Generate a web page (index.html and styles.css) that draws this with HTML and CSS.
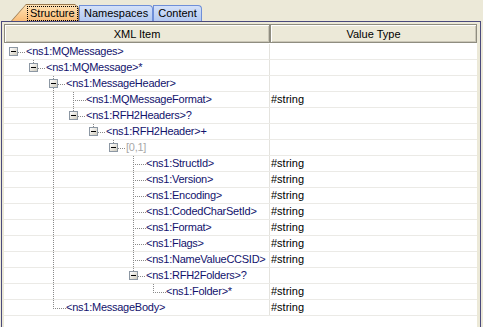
FILE: index.html
```html
<!DOCTYPE html>
<html lang="en">
  <head>
    <meta charset="UTF-8" />
    <title>Structure</title>
    <link rel="stylesheet" href="styles.css">
  </head>
  <body>
    <div class="tabs">
      <div class="tab selected"><span class="tab-label">Structure</span></div>
      <div class="tab">Namespaces</div>
      <div class="tab">Content</div>
    </div>

    <div class="panel">
      <div class="table">
        <div class="header">
          <div class="hcell">XML Item</div>
          <div class="hcell">Value Type</div>
        </div>

        <div class="rows">
          <!-- tree connector lines -->
          <svg class="lines" width="266" height="272">
            <path d="M14 8.5H22 M34 24.5H42 M54 40.5H62 M69 56.5H82 M74 72.5H82 M94 88.5H102 M114 104.5H122
                     M129 120.5H142 M129 136.5H142 M129 152.5H142 M129 168.5H142 M129 184.5H142 M129 200.5H142 M129 216.5H142
                     M134 232.5H142 M149 248.5H162 M49 264.5H62
                     M29.5 16V25 M49.5 32V265 M69.5 48V73 M89.5 80V89 M109.5 96V105 M129.5 112V233 M149.5 240V249" />
          </svg>

          <div class="row"><div class="cell tree lv0"><span class="toggle"></span><span class="name">&lt;ns1:MQMessages&gt;</span></div><div class="cell value"></div></div>
          <div class="row"><div class="cell tree lv1"><span class="toggle"></span><span class="name">&lt;ns1:MQMessage&gt;*</span></div><div class="cell value"></div></div>
          <div class="row"><div class="cell tree lv2"><span class="toggle"></span><span class="name">&lt;ns1:MessageHeader&gt;</span></div><div class="cell value"></div></div>
          <div class="row"><div class="cell tree lv3"><span class="spacer"></span><span class="name">&lt;ns1:MQMessageFormat&gt;</span></div><div class="cell value">#string</div></div>
          <div class="row"><div class="cell tree lv3"><span class="toggle"></span><span class="name">&lt;ns1:RFH2Headers&gt;?</span></div><div class="cell value"></div></div>
          <div class="row"><div class="cell tree lv4"><span class="toggle"></span><span class="name">&lt;ns1:RFH2Header&gt;+</span></div><div class="cell value"></div></div>
          <div class="row"><div class="cell tree lv5"><span class="toggle"></span><span class="name group">[0,1]</span></div><div class="cell value"></div></div>
          <div class="row"><div class="cell tree lv6"><span class="spacer"></span><span class="name">&lt;ns1:StructId&gt;</span></div><div class="cell value">#string</div></div>
          <div class="row"><div class="cell tree lv6"><span class="spacer"></span><span class="name">&lt;ns1:Version&gt;</span></div><div class="cell value">#string</div></div>
          <div class="row"><div class="cell tree lv6"><span class="spacer"></span><span class="name">&lt;ns1:Encoding&gt;</span></div><div class="cell value">#string</div></div>
          <div class="row"><div class="cell tree lv6"><span class="spacer"></span><span class="name">&lt;ns1:CodedCharSetId&gt;</span></div><div class="cell value">#string</div></div>
          <div class="row"><div class="cell tree lv6"><span class="spacer"></span><span class="name">&lt;ns1:Format&gt;</span></div><div class="cell value">#string</div></div>
          <div class="row"><div class="cell tree lv6"><span class="spacer"></span><span class="name">&lt;ns1:Flags&gt;</span></div><div class="cell value">#string</div></div>
          <div class="row"><div class="cell tree lv6"><span class="spacer"></span><span class="name">&lt;ns1:NameValueCCSID&gt;</span></div><div class="cell value">#string</div></div>
          <div class="row"><div class="cell tree lv6"><span class="toggle"></span><span class="name">&lt;ns1:RFH2Folders&gt;?</span></div><div class="cell value"></div></div>
          <div class="row"><div class="cell tree lv7"><span class="spacer"></span><span class="name">&lt;ns1:Folder&gt;*</span></div><div class="cell value">#string</div></div>
          <div class="row"><div class="cell tree lv2"><span class="spacer"></span><span class="name">&lt;ns1:MessageBody&gt;</span></div><div class="cell value">#string</div></div>
        </div>
      </div>
    </div>
  </body>
</html>
```

FILE: styles.css
```css
html,
body {
  margin: 0;
  height: 100%;
}

body {
  width: 483px;
  height: 327px;
  overflow: hidden;
  background: #ece9d8;
  font-family: "Liberation Sans", Arial, sans-serif;
  font-size: 11px;
  color: #000;
}

/* tabs */
.tabs {
  display: flex;
  align-items: flex-end;
  height: 21px;
  padding-left: 11px;
}

.tab {
  height: 15px;
  padding: 0 4px;
  line-height: 15px;
  background: linear-gradient(#d4e1f9, #b3c9f1);
  border: 1px solid #6f8fd8;
  border-bottom: none;
  border-radius: 0 4px 0 0;
}

.tab.selected {
  position: relative;
  height: 17px;
  width: 68px;
  padding: 0;
  border: none;
  background: #9a7a50;
  clip-path: polygon(0 100%, 15px 0, calc(100% - 4px) 0, 100% 4px, 100% 100%);
}

.tab.selected::before {
  content: "";
  position: absolute;
  inset: 1px 1px 0 1px;
  background: linear-gradient(#ffe2b4, #f9bd78);
  clip-path: polygon(0 100%, 14px 0, calc(100% - 3px) 0, 100% 3px, 100% 100%);
}

.tab-label {
  position: relative;
  display: block;
  margin: 2px 1px 0 16px;
  padding: 0 2px;
  line-height: 13px;
  border: 1px dotted #000;
}

/* panel */
.panel {
  margin: 0 2px 0 1px;
  height: 320px;
  padding: 2px 3px 0 2px;
  border: 1px solid #4a4a7c;
  border-bottom: none;
  box-sizing: border-box;
}

.table {
  background: #fff;
  height: 100%;
}

.header {
  display: grid;
  grid-template-columns: 266px 1fr;
  background: #fff;
}

.hcell {
  height: 19px;
  line-height: 18px;
  text-align: center;
  background: #ece9d8;
  border: 1px solid #8f8d80;
  box-shadow: inset 1px 1px 0 #fff, inset -1px -1px 0 #cbc7b8;
  box-sizing: border-box;
}

.rows {
  position: relative;
  margin-top: 1px;
}

.lines {
  position: absolute;
  left: 0;
  top: 0;
}

.lines path {
  fill: none;
  stroke: #8a8a8a;
  stroke-width: 1;
  stroke-dasharray: 1 1;
  shape-rendering: crispEdges;
}

.row {
  display: grid;
  grid-template-columns: 266px 1fr;
  height: 16px;
  border-bottom: 1px solid #ebeae6;
  box-sizing: border-box;
}

.cell {
  display: flex;
  align-items: center;
  line-height: 15px;
  white-space: nowrap;
}

.tree {
  border-right: 1px solid #e4e3de;
  gap: 8px;
}

.value {
  padding-left: 1px;
}

.name {
  color: #12126c;
  letter-spacing: -0.25px;
}

.name.group {
  color: #a8a8a8;
}

.toggle,
.spacer {
  width: 9px;
  height: 9px;
  flex: none;
  box-sizing: border-box;
}

.toggle {
  position: relative;
  border: 1px solid #8c97a3;
  background: linear-gradient(135deg, #ffffff, #cfcbbd);
}

.toggle::after {
  content: "";
  position: absolute;
  left: 1px;
  top: 3px;
  width: 5px;
  height: 1px;
  background: #000;
}

.lv0 { padding-left: 5px; }
.lv1 { padding-left: 25px; }
.lv2 { padding-left: 45px; }
.lv3 { padding-left: 65px; }
.lv4 { padding-left: 85px; }
.lv5 { padding-left: 105px; }
.lv6 { padding-left: 125px; }
.lv7 { padding-left: 145px; }
```
